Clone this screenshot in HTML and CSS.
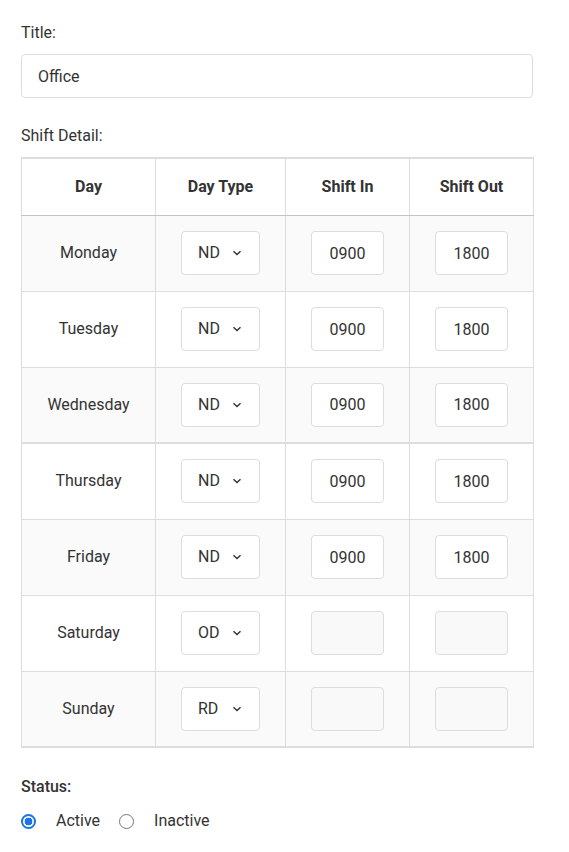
FILE: index.html
```html
<!DOCTYPE html>
<html>
<head>
<meta charset="utf-8">
<link rel="stylesheet" href="styles.css">
</head>
<body>
<form class="form">
  <label class="label" for="title">Title:</label>
  <input id="title" class="text-input" type="text" value="Office">

  <div class="label label-gap">Shift Detail:</div>
  <table class="shift-table">
    <thead>
      <tr><th class="c-day">Day</th><th class="c-type">Day Type</th><th class="c-in">Shift In</th><th class="c-out">Shift Out</th></tr>
    </thead>
    <tbody>
      <tr>
        <td>Monday</td>
        <td><span class="sel"><select><option>ND</option></select><svg class="chev" viewBox="0 0 10 6"><path d="M1.5 1.2 5 4.6 8.5 1.2"/></svg></span></td>
        <td><input class="time" value="0900"></td>
        <td><input class="time" value="1800"></td>
      </tr>
      <tr>
        <td>Tuesday</td>
        <td><span class="sel"><select><option>ND</option></select><svg class="chev" viewBox="0 0 10 6"><path d="M1.5 1.2 5 4.6 8.5 1.2"/></svg></span></td>
        <td><input class="time" value="0900"></td>
        <td><input class="time" value="1800"></td>
      </tr>
      <tr class="split">
        <td>Wednesday</td>
        <td><span class="sel"><select><option>ND</option></select><svg class="chev" viewBox="0 0 10 6"><path d="M1.5 1.2 5 4.6 8.5 1.2"/></svg></span></td>
        <td><input class="time" value="0900"></td>
        <td><input class="time" value="1800"></td>
      </tr>
      <tr>
        <td>Thursday</td>
        <td><span class="sel"><select><option>ND</option></select><svg class="chev" viewBox="0 0 10 6"><path d="M1.5 1.2 5 4.6 8.5 1.2"/></svg></span></td>
        <td><input class="time" value="0900"></td>
        <td><input class="time" value="1800"></td>
      </tr>
      <tr>
        <td>Friday</td>
        <td><span class="sel"><select><option>ND</option></select><svg class="chev" viewBox="0 0 10 6"><path d="M1.5 1.2 5 4.6 8.5 1.2"/></svg></span></td>
        <td><input class="time" value="0900"></td>
        <td><input class="time" value="1800"></td>
      </tr>
      <tr>
        <td>Saturday</td>
        <td><span class="sel"><select><option>OD</option></select><svg class="chev" viewBox="0 0 10 6"><path d="M1.5 1.2 5 4.6 8.5 1.2"/></svg></span></td>
        <td><input class="time" value="" disabled></td>
        <td><input class="time" value="" disabled></td>
      </tr>
      <tr>
        <td>Sunday</td>
        <td><span class="sel"><select><option>RD</option></select><svg class="chev" viewBox="0 0 10 6"><path d="M1.5 1.2 5 4.6 8.5 1.2"/></svg></span></td>
        <td><input class="time" value="" disabled></td>
        <td><input class="time" value="" disabled></td>
      </tr>
    </tbody>
  </table>

  <div class="label label-gap status">Status:</div>
  <div class="radios">
    <label class="radio"><input type="radio" name="status" checked><span>Active</span></label>
    <label class="radio"><input type="radio" name="status"><span>Inactive</span></label>
  </div>
</form>
</body>
</html>
```

FILE: styles.css
```css
* { box-sizing: border-box; }

body {
  margin: 0;
  padding: 23px 36px 0 21px;
  font-family: Roboto, "Liberation Sans", Arial, sans-serif;
  font-size: 16px;
  line-height: 20px;
  color: #333;
  background: #fff;
}

.form {
  width: 512px;
}

.label {
  display: block;
  margin-bottom: 11px;
  color: #333;
}

.label-gap {
  margin-top: 28px;
}

.text-input {
  display: block;
  width: 100%;
  height: 44px;
  padding: 0 16px;
  border: 1px solid #ddd;
  border-radius: 4px;
  font: inherit;
  font-size: 16px;
  color: #333;
  outline: none;
}

.shift-table {
  width: 100%;
  border-collapse: collapse;
  table-layout: fixed;
  border-top: 2px solid #ddd;
  border-bottom: 2px solid #ddd;
  font-size: 16px;
}

.c-day { width: 134px; }
.c-type { width: 130px; }
.c-in { width: 124px; }
.c-out { width: 124px; }

.shift-table th {
  height: 57px;
  padding: 0 8px;
  font-weight: 700;
  text-align: center;
  border: 1px solid #ddd;
  border-bottom: 1px solid #c4c4c4;
  border-top: 2px solid #ddd;
  background: #fff;
}

.shift-table td {
  height: 76px;
  padding: 0 8px;
  text-align: center;
  vertical-align: middle;
  border: 1px solid #ddd;
}

.shift-table tbody tr:nth-child(odd) td {
  background: #fafafa;
}

.shift-table tr.split td {
  border-bottom: 2px solid #ddd;
}

.sel {
  position: relative;
  display: inline-block;
  vertical-align: middle;
}

.sel select {
  appearance: none;
  -webkit-appearance: none;
  width: 79px;
  height: 44px;
  padding: 0 0 0 16px;
  border: 1px solid #ddd;
  border-radius: 4px;
  background: #fff;
  font: inherit;
  font-size: 16px;
  color: #333;
  outline: none;
}

.chev {
  position: absolute;
  left: 51px;
  top: 19px;
  width: 10px;
  height: 6px;
  fill: none;
  stroke: #333;
  stroke-width: 1.4;
  pointer-events: none;
}

.time {
  display: inline-block;
  vertical-align: middle;
  width: 73px;
  height: 44px;
  padding: 0;
  border: 1px solid #ddd;
  border-radius: 4px;
  background: #fff;
  font: inherit;
  font-size: 16px;
  color: #333;
  text-align: center;
  outline: none;
}

.time:disabled {
  background: #f9f9f9;
}

.status {
  font-weight: 500;
  margin-top: 29px;
  margin-bottom: 14px;
}

.radios {
  display: flex;
  align-items: center;
  gap: 19px;
  height: 20px;
}

.radio {
  display: flex;
  align-items: center;
  gap: 20px;
}

.radio input {
  appearance: none;
  -webkit-appearance: none;
  margin: 0;
  width: 15px;
  height: 15px;
  border: 1px solid #767676;
  border-radius: 50%;
  background: #fff;
}

.radio input:checked {
  border: 2px solid #1a73e8;
  background: radial-gradient(circle, #1a73e8 0 3.6px, #fff 4.2px);
}
```
